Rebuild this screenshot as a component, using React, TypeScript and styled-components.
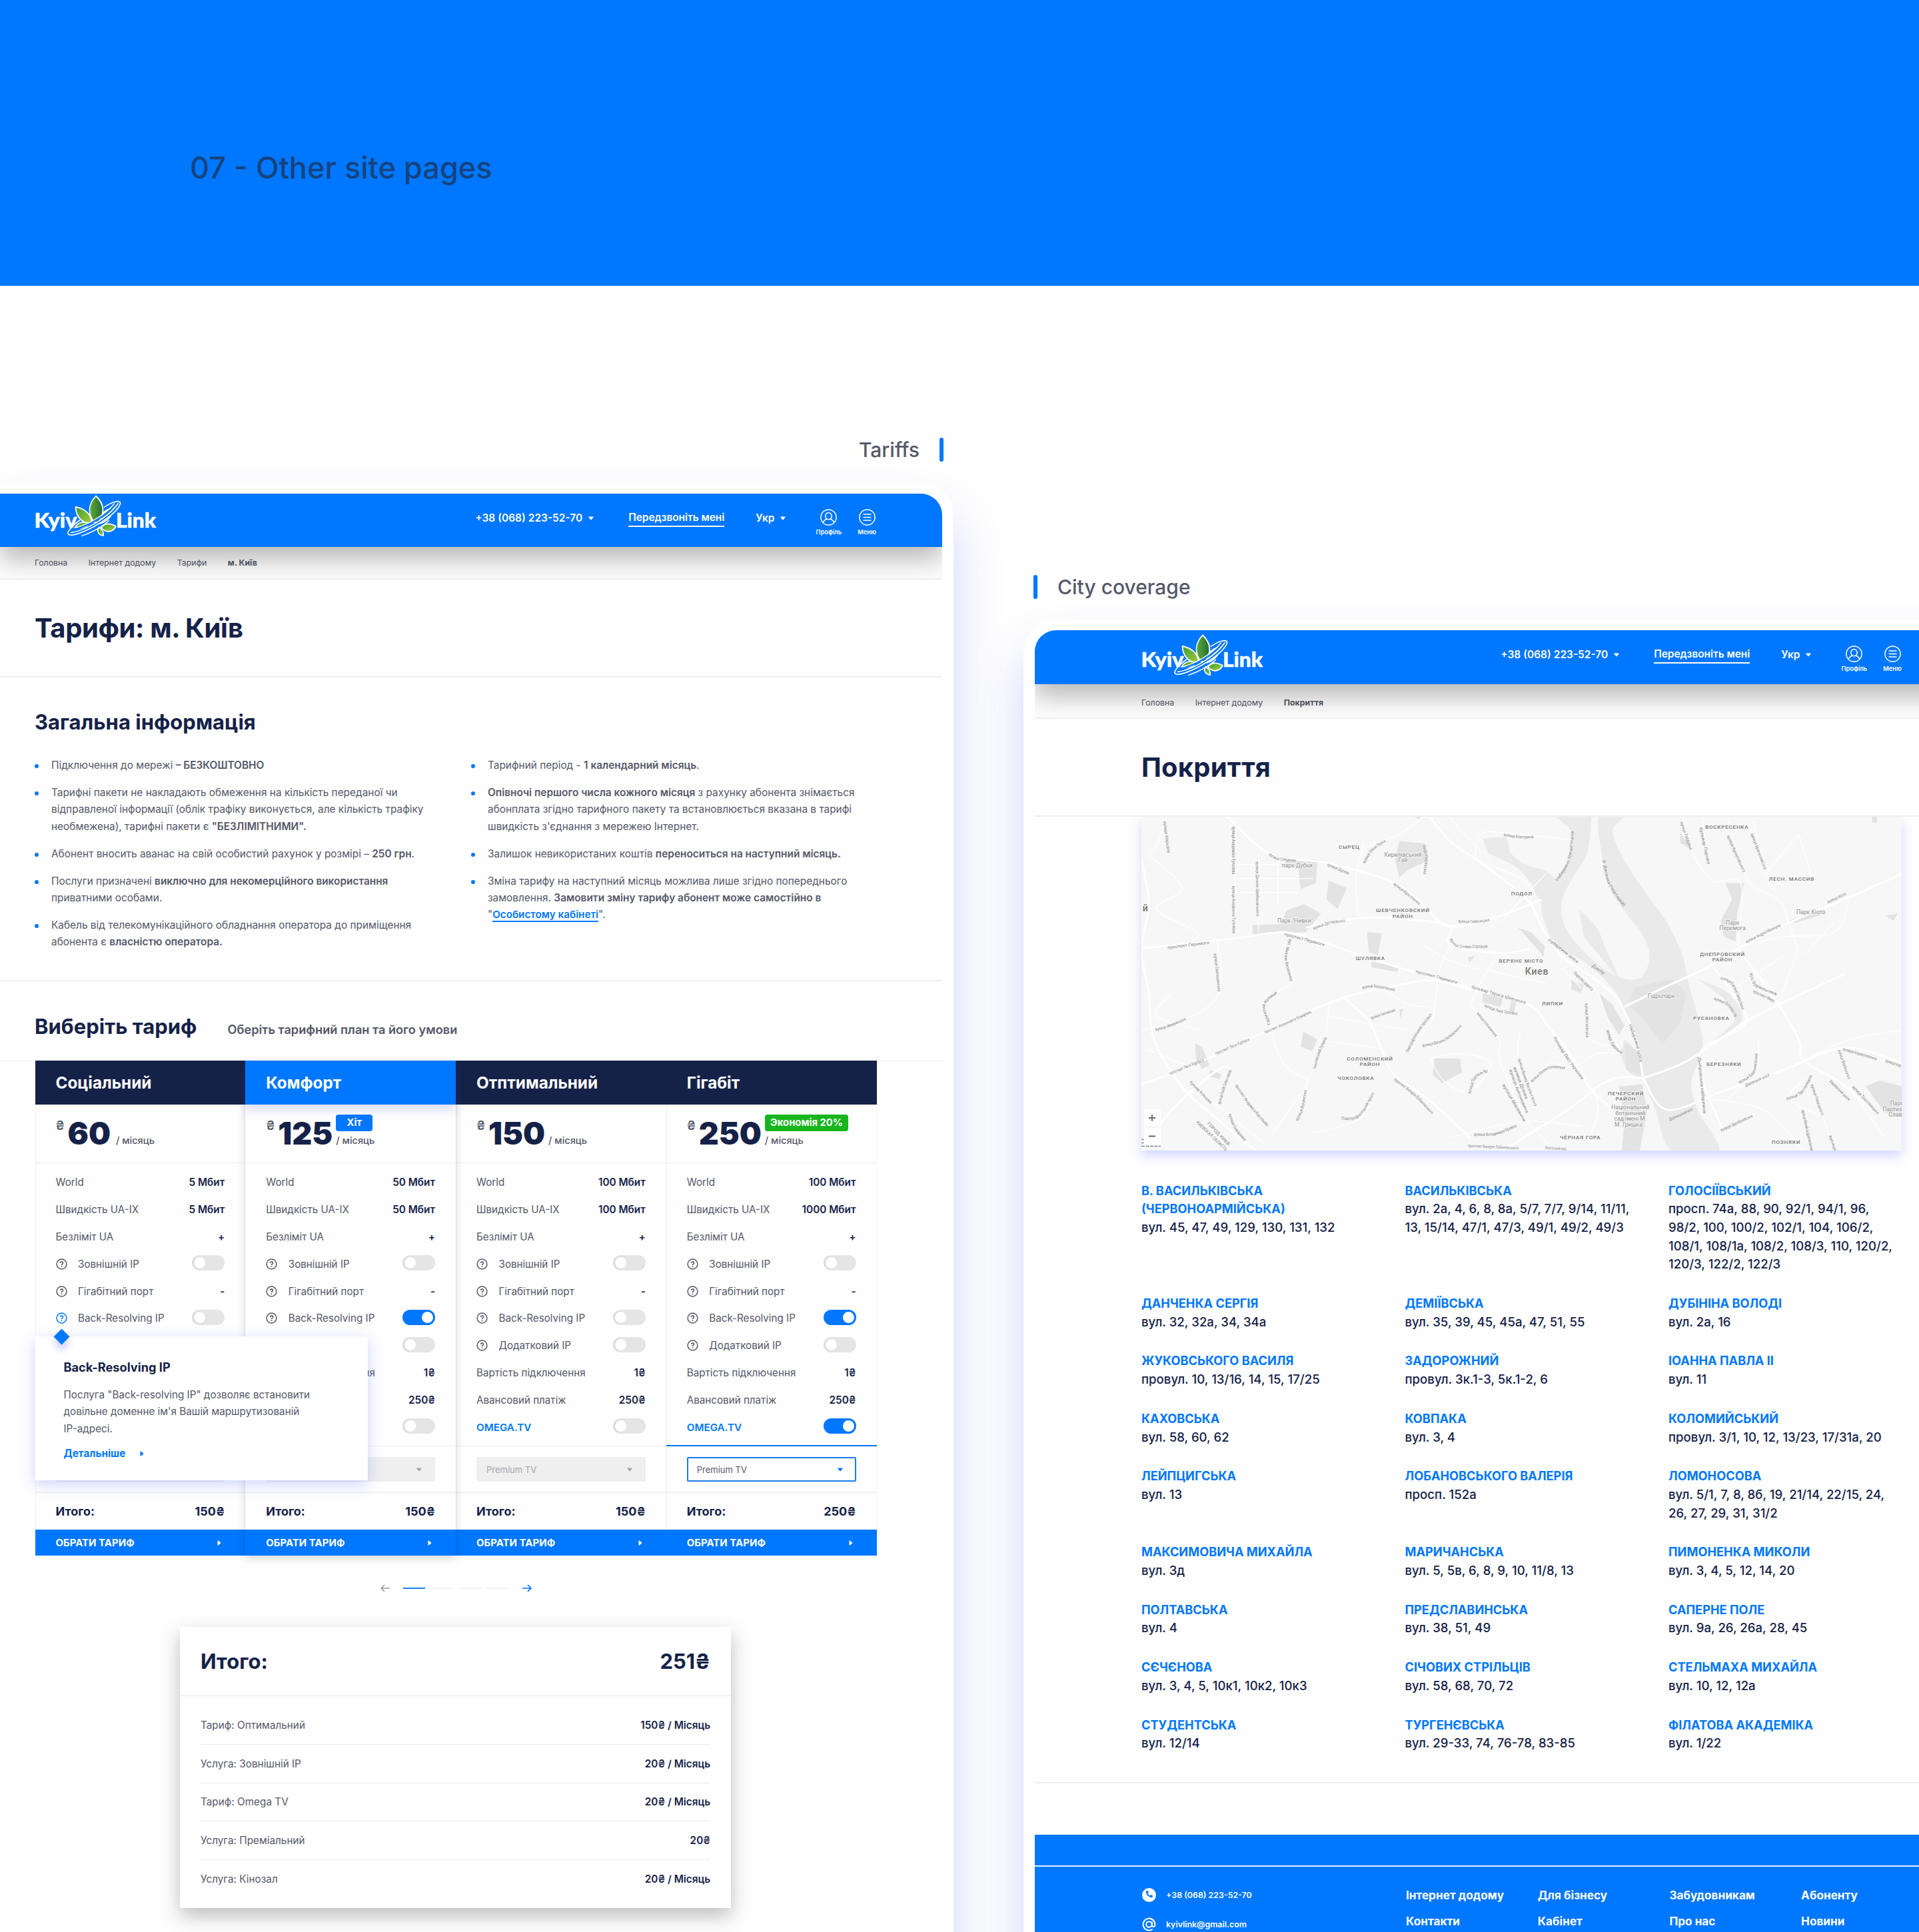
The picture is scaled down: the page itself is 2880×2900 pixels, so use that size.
import React, { Fragment, useId } from "react";
import styled, { createGlobalStyle, css } from "styled-components";

const c = {
  blue: "#0077ff",
  navy: "#152248",
  text: "#555869",
  line: "#f0f0f1",
  white: "#ffffff",
  green: "#17b51d",
};

const Global = createGlobalStyle`
  * { box-sizing: border-box; margin: 0; padding: 0; }
  html, body { width: 2880px; height: 2900px; overflow: hidden; background: #fff; }
  body { font-family: Inter, "Liberation Sans", sans-serif; color: ${c.text}; }
  ul { list-style: none; }
  svg { display: block; flex: none; }
`;

/* ---------- page frame ---------- */

const Page = styled.div`
  width: 2880px;
  height: 2900px;
  overflow: hidden;
  display: flex;
  flex-direction: column;
  background: #fefefe;
`;

const Banner = styled.header`
  flex: none;
  height: 429px;
  padding: 0 285px;
  display: flex;
  align-items: center;
  background: ${c.blue};
`;

const BannerTitle = styled.p`
  margin-top: 75px;
  font-size: 45.1px;
  line-height: 56px;
  font-weight: 500;
  color: #15437f;
`;

const Showcase = styled.main`
  flex: 1;
  min-height: 0;
  display: grid;
  grid-template-columns: 1431px 1400px;
  column-gap: 105px;
  align-items: start;
`;

const Sample = styled.section<{ $top: number }>`
  padding-top: ${(p) => p.$top}px;
`;

const SampleLabel = styled.div<{ $end?: boolean }>`
  height: 36px;
  display: flex;
  flex-direction: ${(p) => (p.$end ? "row-reverse" : "row")};
  align-items: center;
  gap: 30px;
  padding: 0 15px;
  font-size: 30px;
  font-weight: 500;
  color: ${c.text};

  &::before {
    content: "";
    width: 6px;
    height: 36px;
    border-radius: 3px;
    background: ${c.blue};
  }
`;

const Frame = styled.div<{ $side: "left" | "right" }>`
  background: #fefefe;
  box-shadow: 0 50px 70px rgba(70, 90, 255, 0.25);
  ${(p) =>
    p.$side === "left"
      ? css`
          margin-top: 32px;
          padding: 16px 17px 0 0;
          border-top-right-radius: 48px;
        `
      : css`
          margin-top: 31px;
          padding: 16px 0 0 17px;
          border-top-left-radius: 48px;
        `}
`;

const Site = styled.div<{ $side: "left" | "right" }>`
  overflow: hidden;
  background: #fefefe;
  ${(p) =>
    p.$side === "left"
      ? css`
          height: 2300px;
          border-top-right-radius: 32px;
        `
      : css`
          height: 2100px;
          border-top-left-radius: 32px;
        `}
`;

/* ---------- site header ---------- */

const TopBar = styled.div<{ $side: "left" | "right" }>`
  position: relative;
  height: ${(p) => (p.$side === "left" ? 80 : 81)}px;
  width: ${(p) => (p.$side === "left" ? "auto" : "1400px")};
  padding: ${(p) => (p.$side === "left" ? "0 99px 0 52px" : "0 99px 0 160px")};
  display: flex;
  justify-content: space-between;
  background: ${c.blue};
  color: #fff;
  box-shadow: 0 20px 36px rgba(0, 0, 0, 0.26);
`;

const LogoBox = styled.div<{ $drop: number }>`
  padding-top: ${(p) => p.$drop}px;
`;

const TopNav = styled.nav`
  display: flex;
  padding-top: 22px;
  font-size: 15.5px;
  line-height: 28px;
  font-weight: 600;
`;

const NavItem = styled.div<{ $gap?: number }>`
  display: flex;
  gap: 9px;
  height: 28px;
  padding-top: 2px;
  align-items: center;
  margin-right: ${(p) => p.$gap ?? 0}px;
  white-space: nowrap;
`;

const NavLink = styled(NavItem)`
  border-bottom: 2px solid #fff;
  line-height: 26px;
  letter-spacing: -0.08px;
`;

const NavIcon = styled.div<{ $gap?: number }>`
  display: flex;
  flex-direction: column;
  align-items: center;
  gap: 4px;
  padding-top: 1px;
  margin-right: ${(p) => p.$gap ?? 0}px;
  font-size: 9.3px;
  line-height: 12px;
`;

const Crumbs = styled.div<{ $side: "left" | "right" }>`
  height: ${(p) => (p.$side === "left" ? 49 : 52)}px;
  padding: ${(p) => (p.$side === "left" ? "0 52px" : "4px 160px 0")};
  display: flex;
  align-items: center;
  gap: 31.5px;
  font-size: 12.35px;
  border-bottom: 2px solid ${c.line};
  background: #fdfdfd;

  b {
    font-weight: 700;
  }
`;

const TitleBlock = styled.div<{ $side: "left" | "right" }>`
  position: relative;
  height: 147px;
  padding: 0 ${(p) => (p.$side === "left" ? 52 : 160)}px;
  display: flex;
  align-items: center;
  background: #fefefe;
  border-bottom: 2px solid ${c.line};
`;

const H1 = styled.h1<{ $tight?: boolean }>`
  font-size: 40px;
  line-height: 48px;
  font-weight: 700;
  letter-spacing: ${(p) => (p.$tight ? "-0.4px" : "0.2px")};
  color: ${c.navy};
`;

const H2 = styled.h2`
  font-size: 31px;
  line-height: 36px;
  font-weight: 700;
  color: ${c.navy};
`;

/* ---------- general information ---------- */

const Info = styled.section`
  height: 456px;
  padding: 49px 52px 0;
  border-bottom: 2px solid ${c.line};
`;

const InfoColumns = styled.div`
  margin-top: 34px;
  display: grid;
  grid-template-columns: 655px 1fr;
`;

const InfoList = styled.ul`
  display: flex;
  flex-direction: column;
  gap: 15.5px;
`;

const InfoItem = styled.li`
  display: flex;
  gap: 19px;
  font-size: 15.4px;
  line-height: 25.4px;
  white-space: nowrap;

  &::before {
    content: "";
    flex: none;
    width: 6px;
    height: 6px;
    margin-top: 11px;
    border-radius: 50%;
    background: ${c.blue};
  }

  b {
    font-weight: 600;
  }
`;

const CabinetLink = styled.a`
  color: ${c.blue};
  font-weight: 600;
  font-size: 15.2px;
  border-bottom: 2px solid ${c.blue};
`;

/* ---------- tariff table ---------- */

const PickBar = styled.div`
  height: 120px;
  padding: 50px 52px 0;
  display: flex;
  align-items: baseline;
  gap: 46px;
  border-bottom: 1px solid ${c.line};
`;

const PickHint = styled.p`
  font-size: 18.2px;
  font-weight: 600;
`;

const Table = styled.div`
  position: relative;
  width: 1263px;
  margin: -1px 0 0 52.5px;
  display: grid;
  grid-template-columns: repeat(4, 1fr);
`;

const Column = styled.article<{ $hit?: boolean }>`
  position: relative;
  z-index: ${(p) => (p.$hit ? 1 : 0)};
  box-shadow: ${(p) =>
    p.$hit ? "0 4px 12px rgba(0, 0, 0, 0.16)" : `inset 1px 0 ${c.line}, inset -1px 0 #f6f6f6`};
`;

const ColumnHead = styled.h3<{ $hit?: boolean }>`
  height: 66px;
  padding: 0 31px;
  display: flex;
  align-items: center;
  font-size: 24.3px;
  font-weight: 700;
  color: #fff;
  background: ${(p) => (p.$hit ? c.blue : c.navy)};
  box-shadow: ${(p) => (p.$hit ? "0 8px 14px rgba(70, 90, 255, 0.2)" : "none")};
`;

const Price = styled.div`
  height: 88px;
  padding: 15px 31px 0;
  display: flex;
  border-bottom: 1px solid #ececee;
  color: ${c.text};
`;

const Currency = styled.span`
  margin-top: 7px;
  width: 18px;
  font-size: 19px;
  line-height: 20px;
  font-weight: 600;
`;

const Amount = styled.span`
  margin-top: 5px;
  font-size: 46.5px;
  line-height: 46px;
  font-weight: 900;
  color: ${c.navy};
`;

const PriceSide = styled.div<{ $gap: number }>`
  margin-left: ${(p) => p.$gap}px;
  display: flex;
  flex-direction: column;
  align-items: flex-start;
  font-size: 14.5px;
  line-height: 20px;
  font-weight: 500;
  gap: 4px;
`;

const BadgeSlot = styled.div`
  height: 25px;
`;

const Badge = styled.span<{ $wide?: boolean }>`
  display: block;
  width: ${(p) => (p.$wide ? 125 : 55)}px;
  height: 25px;
  border-radius: 4px;
  text-align: center;
  line-height: 25px;
  font-size: 14.8px;
  font-weight: 700;
  color: #fff;
  background: ${(p) => (p.$wide ? c.green : c.blue)};
`;

const Features = styled.div<{ $active?: boolean }>`
  height: 425px;
  padding: 8.3px 31px 0;
  border-bottom: ${(p) => (p.$active ? `2px solid ${c.blue}` : "1px solid #ececee")};
`;

const Feature = styled.div`
  height: 40.85px;
  display: flex;
  align-items: center;
  font-size: 15.2px;
`;

const FeatureName = styled.span<{ $brand?: boolean }>`
  flex: 1;
  white-space: nowrap;
  font-weight: ${(p) => (p.$brand ? 600 : 400)};
  color: ${(p) => (p.$brand ? c.blue : c.text)};
`;

const FeatureHelp = styled.span`
  width: 33.5px;
`;

const FeatureValue = styled.b`
  font-size: 15.3px;
  font-weight: 600;
  color: ${c.navy};
  white-space: nowrap;
`;

const Toggle = styled.span<{ $on?: boolean }>`
  flex: none;
  width: 49px;
  height: 23px;
  margin-top: -3px;
  padding: 3px;
  display: flex;
  justify-content: ${(p) => (p.$on ? "flex-end" : "flex-start")};
  border-radius: 12px;
  background: ${(p) => (p.$on ? c.blue : "#e5e5e5")};

  &::before {
    content: "";
    width: 17px;
    height: 17px;
    border-radius: 50%;
    background: #fff;
    box-shadow: ${(p) => (p.$on ? "none" : "-2px 0 3px rgba(0, 0, 0, 0.08)")};
  }
`;

const SelectArea = styled.div`
  height: 70px;
  padding: 16px 31px;
  border-bottom: 2px solid ${c.line};
`;

const Select = styled.div<{ $active?: boolean }>`
  height: 37px;
  padding: 0 20px 0 15px;
  display: flex;
  align-items: center;
  justify-content: space-between;
  border-radius: 2px;
  font-size: 13px;
  ${(p) =>
    p.$active
      ? css`
          border: 2px solid #1b7df0;
          padding: 0 18px 0 13px;
          color: ${c.text};
        `
      : css`
          background: #efefef;
          color: #a2a3ab;
        `}
`;

const Total = styled.div`
  height: 55px;
  padding: 0 31px;
  display: flex;
  align-items: center;
  justify-content: space-between;
  font-size: 18px;
  font-weight: 700;
  color: ${c.navy};
`;

const Choose = styled.button`
  width: 100%;
  height: 39px;
  padding: 0 36px 0 31px;
  border: 0;
  display: flex;
  align-items: center;
  justify-content: space-between;
  background: ${c.blue};
  color: #fff;
  font: 700 15px Inter, sans-serif;
`;

const Popup = styled.aside`
  position: absolute;
  z-index: 2;
  left: 0;
  top: 414px;
  width: 499px;
  height: 216px;
  padding: 34px 43px 0;
  background: #fff;
  box-shadow: 0 6px 20px rgba(70, 90, 255, 0.26);
  font-size: 15.25px;
  line-height: 25.4px;

  &::before {
    content: "";
    position: absolute;
    left: 31.5px;
    top: -8.5px;
    width: 17px;
    height: 17px;
    transform: rotate(45deg);
    background: ${c.blue};
    box-shadow: 6px 6px 12px rgba(70, 90, 255, 0.3);
  }
`;

const PopupTitle = styled.h4`
  font-size: 18.2px;
  line-height: 24px;
  font-weight: 700;
  color: ${c.navy};
  margin-bottom: 17px;
`;

const PopupMore = styled.a`
  margin-top: 12px;
  display: flex;
  align-items: center;
  gap: 22px;
  font-weight: 700;
  color: ${c.blue};
`;

const Pager = styled.div`
  width: 1263px;
  height: 20px;
  margin: 39px 0 0 53px;
  display: flex;
  justify-content: center;
  align-items: center;
  gap: 20px;
`;

const PagerBars = styled.div`
  display: flex;
  gap: 9px;
`;

const PagerBar = styled.span<{ $on?: boolean }>`
  width: 33px;
  height: 2px;
  background: ${(p) => (p.$on ? "#1b7df0" : "#f0f0f1")};
`;

const Summary = styled.section`
  width: 827px;
  margin: 48px 0 0 270px;
  padding-bottom: 16px;
  background: #fff;
  box-shadow: 0 12px 28px rgba(0, 0, 0, 0.26);
`;

const SummaryHead = styled.div`
  height: 104px;
  padding: 0 31px;
  margin-bottom: 14.5px;
  display: flex;
  align-items: center;
  justify-content: space-between;
  border-bottom: 1px solid #e9e9eb;
  font-size: 31px;
  font-weight: 700;
  color: ${c.navy};
`;

const SummaryRow = styled.div`
  height: 57.6px;
  margin: 0 31px;
  display: flex;
  align-items: center;
  justify-content: space-between;
  font-size: 15.3px;

  & + & {
    border-top: 1px solid #e9e9eb;
  }
`;

/* ---------- coverage page ---------- */

const MapCard = styled.div`
  width: 1141px;
  height: 501px;
  margin-left: 160px;
  background: #f7f7f7;
  box-shadow: 0 8px 16px rgba(70, 90, 255, 0.24);
`;

const Districts = styled.section`
  height: 950px;
  padding: 46.5px 0 0 160px;
  display: grid;
  grid-template-columns: repeat(3, 395.5px);
  align-content: start;
  row-gap: 31px;
  border-bottom: 2px solid ${c.line};
`;

const District = styled.div`
  font-size: 18.6px;
  line-height: 27.7px;
  font-weight: 500;
  color: ${c.navy};
  white-space: pre-line;
`;

const DistrictName = styled.h3`
  font-size: 18.2px;
  font-weight: 700;
  color: ${c.blue};
`;

const Footer = styled.footer`
  width: 1400px;
  height: 300px;
  margin-top: 77px;
  padding-top: 46px;
  background: ${c.blue};
  color: #fff;
`;

const FooterBody = styled.div`
  border-top: 2px solid #e6f2ff;
  padding: 29.5px 0 0 161px;
  display: flex;
`;

const Contacts = styled.ul`
  width: 396px;
`;

const Contact = styled.li`
  height: 43.5px;
  padding-bottom: 17px;
  display: flex;
  align-items: center;
  gap: 15px;
  font-size: 12.4px;
  font-weight: 600;
`;

const FooterLinks = styled.div`
  display: grid;
  grid-template-columns: repeat(4, 197.7px);
  grid-auto-rows: 39.7px;
  font-size: 17.2px;
  line-height: 26px;
  font-weight: 700;
`;

/* ---------- icons ---------- */

const CaretDown = ({ color = "#fff" }: { color?: string }) => (
  <svg width="8" height="6" viewBox="0 0 8 6">
    <path d="M1 .5h6q1 0 .4 1L4.8 4.9q-.8.9-1.6 0L.6 1.5Q0 .5 1 .5Z" fill={color} />
  </svg>
);

const CaretRight = ({ color = "#fff" }: { color?: string }) => (
  <svg width="6" height="8" viewBox="0 0 6 8">
    <path d="M.5 1q0-1 1-.4L4.9 3.2q.9.8 0 1.6L1.5 7.4Q.5 8 .5 7Z" fill={color} />
  </svg>
);

const ProfileIcon = () => (
  <svg width="25" height="25" viewBox="0 0 25 25" fill="none" stroke="#fff" strokeWidth="1.5">
    <circle cx="12.5" cy="12.5" r="11.6" />
    <ellipse cx="12.5" cy="10.6" rx="4.7" ry="5.2" />
    <path d="M4.200 20.400c1-3 3-4.300 5.800-5.400M20.800 20.400c-1-3-3-4.300-5.800-5.400" />
  </svg>
);

const MenuIcon = () => (
  <svg width="25" height="25" viewBox="0 0 25 25" fill="none" stroke="#fff" strokeWidth="1.5">
    <circle cx="12.5" cy="12.5" r="11.6" />
    <path d="M6.500 8h12M6.500 12.500h12M6.500 17h12" />
  </svg>
);

const HelpIcon = ({ color = c.text }: { color?: string }) => (
  <svg width="17" height="17" viewBox="0 0 17 17" fill="none" stroke={color} strokeWidth="1.5">
    <circle cx="8.500" cy="8.500" r="7.400" />
    <path d="M6.500 6.900a2 2 0 1 1 2.700 1.900q-.7.300-.7 1.200" strokeWidth="1.600" />
    <circle cx="8.500" cy="12.200" r=".9" fill={color} stroke="none" />
  </svg>
);

const ArrowIcon = ({ color, flip }: { color: string; flip?: boolean }) => (
  <svg width="14" height="12" viewBox="0 0 14 12" fill="none" stroke={color} strokeWidth="1.700">
    <path d={flip ? "M14 6H1.500M6 1 1.200 6 6 11" : "M0 6h12.500M8 1l4.800 5L8 11"} />
  </svg>
);

const PhoneIcon = () => (
  <svg width="21" height="21" viewBox="0 0 21 21">
    <circle cx="10.500" cy="10.500" r="10.500" fill="#fff" />
    <path
      d="M6.300 4.600 8.200 4q.5-.1.700.4l.9 2.100q.2.500-.2.800l-1.100.9a7 7 0 0 0 3.400 3.400l.9-1.100q.3-.4.800-.2l2.100.9q.5.200.4.700l-.6 1.900q-.1.500-.7.500A9.300 9.300 0 0 1 5.700 5.300q0-.5.600-.7Z"
      fill={c.blue}
    />
  </svg>
);

const AtIcon = () => (
  <svg width="21" height="21" viewBox="0 0 21 21" fill="none" stroke="#fff" strokeWidth="2">
    <circle cx="10.500" cy="10.500" r="4.300" />
    <path d="M14.800 6.200v5.300q0 2.600 2.300 2.600t2.300-3.600a8.900 8.900 0 1 0-3.600 7.200" />
  </svg>
);

const Logo = () => {
  const id = useId().replace(/:/g, "");
  return (
    <svg width="184" height="64" viewBox="0 0 184 64">
      <defs>
        <linearGradient id={`${id}a`} x1="0" y1="0" x2="1" y2="0">
          <stop offset="0" stopColor="#63ac35" />
          <stop offset="1" stopColor="#1f6b35" />
        </linearGradient>
        <linearGradient id={`${id}b`} x1="0" y1="0" x2="1" y2="1">
          <stop offset="0" stopColor="#3c8f37" />
          <stop offset="1" stopColor="#9ccb3b" />
        </linearGradient>
        <linearGradient id={`${id}c`} x1="0" y1="0" x2="1" y2="1">
          <stop offset="0" stopColor="#3f9a35" />
          <stop offset="1" stopColor="#a5d03c" />
        </linearGradient>
      </defs>
      <g
        fontFamily="Lato, sans-serif"
        fontWeight="900"
        fontSize="29.500"
        fill="#fff"
        stroke="#fff"
        strokeWidth=".5"
      >
        <text x="-.5" y="50" textLength="64" lengthAdjust="spacingAndGlyphs">Kyiv</text>
        <text x="122" y="50" textLength="60" lengthAdjust="spacingAndGlyphs">Link</text>
      </g>
      <g stroke="#fff" strokeWidth="1.800" strokeLinejoin="round">
        <path d="M61 49C65 42 73 41 82 42 80 50 70 53 61 49Z" fill={`url(#${id}b)`} />
        <path d="M61.500 19C73 21 85 28 86 43 72 45 62 34 61.500 19Z" fill={`url(#${id}c)`} />
        <path d="M119 20C107 22 98 29 95 44 107 43 116 34 119 20Z" fill={`url(#${id}b)`} />
        <path d="M92 2.500C104 14 106 27 96 42H89C79 28 81 14 92 2.500Z" fill={`url(#${id}a)`} />
        <path d="M100 50C104 43 113 43 122 48 117 58 106 58 100 50Z" fill={`url(#${id}c)`} />
        <path d="M96 50C102 53 104 58 103 62 96 61 93 56 96 50Z" fill={`url(#${id}b)`} />
      </g>
      <g fill="none" transform="translate(90.500 37) rotate(-28)">
        <path d="M-43 3C-22 11 20 10 43-3" stroke={c.blue} strokeWidth="3.500" />
        <path d="M-36-1C-16 5 18 4 38-5" stroke={c.blue} strokeWidth="2.500" />
        <path d="M-20-9.200C-36-7-47-2.500-46 1.500-44 12 30 13 44.500-2.500 48-8 34-11 20-9" stroke="#fff" strokeWidth="1.700" />
        <path d="M-42 1C-20 9 20 7.500 42-4.500" stroke="#fff" strokeWidth="1.600" />
        <path d="M-34-3C-14 3 16 2 37-7" stroke="#fff" strokeWidth="1.400" />
        <path d="M-30 13C-12 16 6 15 18 12" stroke="#fff" strokeWidth="1.400" />
      </g>
    </svg>
  );
};

/* ---------- city map ---------- */

type Pt = [number, number];

const MX = 0.7589;
const MY = 1 / 2.851;
const toMap = ([x, y]: Pt): Pt => [(x - 30) * MX, (y - 46) * MY];

const smooth = (raw: Pt[]) => {
  const p = raw.map(toMap);
  let d = `M${p[0][0]} ${p[0][1]}`;
  for (let i = 0; i < p.length - 1; i++) {
    const a = p[i - 1] ?? p[i];
    const b = p[i];
    const e = p[i + 1];
    const f = p[i + 2] ?? e;
    d += `C${b[0] + (e[0] - a[0]) / 6} ${b[1] + (e[1] - a[1]) / 6} ${e[0] - (f[0] - b[0]) / 6} ${e[1] - (f[1] - b[1]) / 6} ${e[0]} ${e[1]}`;
  }
  return d;
};

const lengthOf = (raw: Pt[]) => {
  const p = raw.map(toMap);
  return p.slice(1).reduce((s, q, i) => s + Math.hypot(q[0] - p[i][0], q[1] - p[i][1]), 0);
};

const rivers: Pt[][] = [
  [[845, 40], [880, 110], [878, 220], [850, 320], [822, 400], [828, 500], [850, 590], [900, 660], [945, 740], [975, 820], [990, 900], [1008, 1000], [1018, 1090], [1022, 1170], [1045, 1290], [1080, 1480], [1172, 1480], [1130, 1300], [1118, 1180], [1140, 1040], [1130, 900], [1112, 760], [1100, 640], [1070, 500], [1030, 380], [990, 250], [962, 110], [985, 40], [935, 40], [940, 200], [955, 340], [985, 450], [1018, 540], [1035, 640], [1020, 730], [985, 740], [940, 690], [895, 600], [865, 500], [862, 400], [885, 300], [912, 200], [920, 40]],
  [[705, 140], [750, 138], [760, 200], [790, 250], [830, 280], [850, 330], [820, 400], [800, 330], [770, 260], [715, 200]],
  [[895, 440], [930, 520], [950, 620], [975, 740], [940, 650], [905, 560]],
  [[1130, 740], [1190, 800], [1218, 900], [1190, 980], [1140, 1040], [1185, 960], [1205, 900], [1180, 820]],
  [[985, 1000], [1012, 1060], [1020, 1160], [990, 1130], [978, 1060]],
];

const parks: Pt[][] = [
  [[318, 225], [378, 230], [375, 330], [345, 355], [340, 270], [312, 262]],
  [[400, 318], [436, 350], [418, 440], [396, 400]],
  [[540, 150], [590, 160], [592, 240], [560, 270], [540, 305], [532, 230]],
  [[318, 445], [352, 420], [385, 460], [355, 540], [250, 548], [250, 510], [305, 505]],
  [[476, 540], [505, 545], [498, 640], [480, 625]],
  [[485, 665], [540, 690], [535, 710], [485, 690]],
  [[705, 800], [745, 820], [740, 860], [705, 840]],
  [[762, 830], [772, 835], [766, 890], [757, 880]],
  [[775, 520], [800, 540], [828, 600], [825, 645], [808, 600]],
  [[1185, 330], [1222, 330], [1208, 460], [1205, 580], [1182, 560], [1176, 490], [1198, 400]],
  [[1310, 490], [1380, 440], [1382, 460], [1325, 500]],
  [[610, 1080], [660, 1080], [664, 1140], [625, 1185], [606, 1150]],
  [[350, 965], [378, 1000], [368, 1048], [345, 1030]],
  [[136, 1015], [150, 1030], [165, 1110], [150, 1125], [138, 1080]],
  [[165, 1130], [187, 1145], [185, 1170], [165, 1158]],
  [[880, 745], [905, 765], [900, 800], [880, 785]],
  [[935, 800], [962, 850], [985, 940], [975, 980], [950, 900]],
  [[985, 1010], [1015, 1060], [1020, 1155], [990, 1130]],
  [[1005, 775], [1080, 740], [1108, 800], [1095, 930], [1060, 1020], [1030, 930], [995, 850]],
  [[975, 1200], [1020, 1190], [1030, 1300], [1015, 1480], [980, 1480], [985, 1350]],
  [[1462, 1200], [1490, 1175], [1535, 1200], [1535, 1330], [1500, 1310]],
  [[1475, 46], [1485, 46], [1485, 72], [1475, 72]],
  [[1095, 110], [1118, 185], [1096, 160]],
  [[675, 650], [690, 640], [680, 668]],
  [[540, 865], [548, 870], [542, 910]],
  [[1500, 470], [1525, 460], [1518, 490]],
  [[568, 40], [585, 40], [578, 56]],
];

const mainRoads: Pt[][] = [
  [[30, 608], [120, 590], [220, 565], [315, 540], [400, 590], [500, 665], [600, 730], [700, 790], [800, 855], [830, 930], [870, 1040], [905, 1170], [940, 1260], [1010, 1340]],
  [[30, 1190], [120, 1120], [230, 1010], [330, 910], [430, 820], [530, 770], [600, 745], [650, 765], [680, 790]],
  [[600, 46], [640, 150], [700, 240], [760, 340], [800, 420], [825, 530], [860, 640], [920, 730], [965, 810], [990, 900], [1010, 1010], [1022, 1165]],
  [[985, 860], [1060, 780], [1150, 690], [1210, 610], [1310, 500], [1430, 390], [1535, 290]],
  [[1022, 1165], [1110, 1090], [1220, 930], [1290, 850], [1420, 720]],
  [[1022, 1165], [980, 1160], [940, 1190], [880, 1290], [800, 1400], [740, 1480]],
  [[30, 230], [45, 420], [30, 610], [45, 800], [55, 1000], [110, 1200], [180, 1340], [260, 1480]],
  [[200, 46], [285, 205], [400, 245], [530, 330], [590, 430], [640, 515], [740, 470], [820, 400]],
  [[355, 520], [460, 480], [560, 485], [640, 515], [640, 590], [740, 630], [800, 610]],
  [[1022, 1165], [1070, 1300], [1180, 1220], [1300, 1130], [1420, 1035], [1535, 1100]],
  [[1210, 610], [1290, 850], [1330, 1000], [1340, 1090], [1410, 1180], [1480, 1310]],
  [[430, 820], [480, 920], [505, 1040], [530, 1150], [600, 1260], [680, 1420]],
  [[1165, 700], [1195, 790], [1225, 930], [1140, 1040], [1140, 1170], [1180, 1390]],
  [[30, 1480], [90, 1300], [180, 1130], [205, 1120]],
];

const minorRoads: Pt[][] = [
  [[215, 60], [215, 540]], [[262, 200], [262, 540]], [[180, 575], [185, 790], [130, 900], [30, 960]],
  [[325, 560], [318, 650], [330, 750], [275, 830], [283, 930], [310, 1100], [360, 1170]],
  [[470, 160], [455, 300], [458, 470]], [[590, 46], [540, 120], [475, 180], [465, 260]],
  [[640, 46], [660, 100], [720, 230]], [[690, 230], [700, 120], [760, 118], [880, 145]],
  [[505, 780], [560, 850], [610, 880], [560, 1050]], [[680, 850], [735, 980], [740, 1100], [790, 1340]],
  [[490, 910], [550, 860]], [[400, 850], [395, 960], [370, 1120], [350, 1230], [340, 1340]],
  [[640, 600], [620, 700], [610, 880]], [[740, 630], [710, 720], [680, 850]],
  [[830, 290], [760, 450], [740, 500]], [[1100, 46], [1120, 200], [1160, 320], [1215, 330], [1210, 600]],
  [[1140, 46], [1150, 250]], [[1190, 60], [1230, 320], [1290, 400], [1310, 500], [1330, 620]],
  [[1240, 60], [1265, 280], [1285, 370]], [[1330, 120], [1260, 300]], [[1330, 120], [1360, 330]],
  [[1300, 640], [1210, 770]], [[1330, 600], [1290, 850]], [[1240, 700], [1290, 810]],
  [[1250, 1000], [1245, 1130], [1190, 1250]], [[1410, 1040], [1430, 1170]], [[1355, 1150], [1310, 1250], [1380, 1330]],
  [[1340, 1090], [1430, 1000], [1535, 960]], [[1140, 1250], [1260, 1300], [1340, 1480]],
  [[780, 960], [775, 1090], [810, 1280]], [[740, 1180], [790, 1340], [850, 1480]],
  [[800, 1180], [840, 1100], [880, 1120], [930, 1060], [980, 1060]], [[860, 1000], [930, 1250], [920, 1400]],
  [[910, 840], [915, 990], [960, 1030]], [[600, 1080], [660, 1060], [720, 1100], [680, 1220], [630, 1180], [600, 1080]],
  [[130, 1180], [190, 1300], [270, 1440]], [[215, 1190], [280, 1370]], [[490, 1220], [460, 1340], [370, 1400]],
  [[345, 1230], [290, 1400]], [[80, 46], [60, 170], [45, 200]], [[45, 210], [110, 350], [60, 440], [140, 540], [130, 580]],
  [[640, 1420], [780, 1350], [900, 1370]], [[680, 1450], [820, 1470]], [[1400, 500], [1340, 640]],
  [[890, 700], [930, 790], [950, 900], [975, 1050]], [[1430, 1200], [1500, 1420]], [[1360, 1200], [1400, 1480]],
  [[210, 310], [370, 310]], [[210, 370], [340, 370]], [[210, 250], [300, 250]], [[300, 250], [300, 420]],
  [[400, 900], [560, 960]], [[380, 1000], [510, 1040]], [[710, 700], [830, 760]], [[740, 620], [800, 720]],
  [[590, 600], [640, 660], [700, 700]], [[860, 690], [900, 780]], [[700, 240], [790, 320], [800, 420]],
  [[90, 800], [60, 900], [150, 960]], [[40, 1040], [130, 1120]], [[1220, 600], [1300, 560], [1400, 540], [1430, 400]],
];

const places: { at: Pt; text: string[]; kind?: "park" | "city" }[] = [
  { at: [441, 173], text: ["СЫРЕЦ"] },
  { at: [547, 458], text: ["ШЕВЧЕНКОВСКИЙ", "РАЙОН"] },
  { at: [782, 375], text: ["ПОДОЛ"] },
  { at: [1188, 90], text: ["ВОСКРЕСЕНКА"] },
  { at: [1316, 311], text: ["ЛЕСН. МАССИВ"] },
  { at: [483, 649], text: ["ШУЛЯВКА"] },
  { at: [781, 662], text: ["ВЕРХНЄ МІСТО"] },
  { at: [1179, 645], text: ["ДНЕПРОВСКИЙ", "РАЙОН"] },
  { at: [843, 845], text: ["ЛИПКИ"] },
  { at: [1157, 907], text: ["РУСАНОВКА"] },
  { at: [482, 1092], text: ["СОЛОМЕНСКИЙ", "РАЙОН"] },
  { at: [454, 1164], text: ["ЧОКОЛОВКА"] },
  { at: [1182, 1104], text: ["БЕРЕЗНЯКИ"] },
  { at: [988, 1240], text: ["ПЕЧЕРСКИЙ", "РАЙОН"] },
  { at: [898, 1417], text: ["ЧЁРНАЯ ГОРА"] },
  { at: [1305, 1437], text: ["ПОЗНЯКИ"] },
  { at: [812, 707], text: ["Киев"], kind: "city" },
  { at: [38, 437], text: ["й"], kind: "city" },
  { at: [547, 220], text: ["Кирилівський", "Гай"], kind: "park" },
  { at: [338, 253], text: ["парк Дубки"], kind: "park" },
  { at: [334, 491], text: ['Парк "Нивки"'], kind: "park" },
  { at: [1199, 511], text: ["Парк", "Перемога"], kind: "park" },
  { at: [1354, 455], text: ["Парк Кіото"], kind: "park" },
  { at: [1058, 814], text: ["Гідропарк"], kind: "park" },
  { at: [997, 1326], text: ["Національний", "ботанічний", "сад імені М.", "М. Гришка…"], kind: "park" },
  { at: [1524, 1297], text: ["Парк", "Партизанс", "Слави"], kind: "park" },
];

const streets: { path: Pt[]; name: string }[] = [
  { path: [[76, 66], [84, 200]], name: "вулиця Маршала" },
  { path: [[212, 88], [212, 292]], name: "вулиця Академіка Туполєва" },
  { path: [[212, 342], [213, 545]], name: "вулиця Академіка Туполєва" },
  { path: [[259, 238], [260, 472]], name: "вулиця Данила Щербаківського" },
  { path: [[283, 205], [300, 225], [335, 232]], name: "вулиця Стеценка" },
  { path: [[398, 250], [440, 288]], name: "вулиця Щусєва" },
  { path: [[470, 243], [485, 190], [512, 148]], name: "вулиця Олени Теліги" },
  { path: [[588, 168], [594, 215], [590, 292]], name: "Петропавлівська" },
  { path: [[747, 122], [775, 132], [805, 132]], name: "вулиця Електриків" },
  { path: [[851, 318], [875, 230], [882, 108]], name: "Набережно-Хрещатицька" },
  { path: [[530, 332], [555, 375], [580, 418]], name: "вулиця Юрія Іллєнка" },
  { path: [[945, 232], [955, 330], [985, 428]], name: "р. Десенка (Чорторий)" },
  { path: [[657, 493], [690, 495], [718, 486]], name: "вулиця Глибочицька" },
  { path: [[642, 568], [658, 600], [715, 600]], name: "вулиця Січових Стрільців" },
  { path: [[370, 524], [400, 500], [432, 490]], name: "вулиця Дегтярівська" },
  { path: [[82, 606], [164, 584]], name: "проспект Перемоги" },
  { path: [[313, 548], [392, 594]], name: "проспект Перемоги" },
  { path: [[573, 708], [654, 755]], name: "проспект Перемоги" },
  { path: [[683, 774], [790, 842]], name: "бульвар Тараса Шевченка" },
  { path: [[835, 572], [865, 620], [893, 668]], name: "Набережне шосе" },
  { path: [[922, 682], [945, 716]], name: "Днепр" },
  { path: [[886, 712], [922, 787]], name: "Паркова дорога" },
  { path: [[176, 632], [184, 793]], name: "вулиця Святошинська" },
  { path: [[325, 570], [316, 650], [327, 748]], name: "вул. Миколи Василенка" },
  { path: [[283, 936], [272, 850], [298, 795]], name: "Гарматна вулиця" },
  { path: [[467, 778], [490, 770], [531, 786]], name: "вулиця Борщагівська" },
  { path: [[484, 908], [532, 872]], name: "вулиця Смілянська" },
  { path: [[58, 958], [85, 940], [117, 910]], name: "вулиця Жмеринська" },
  { path: [[273, 968], [310, 935], [365, 880]], name: "проспект Космонавта Комарова" },
  { path: [[177, 1060], [243, 998]], name: "проспект Леся Курбаса" },
  { path: [[86, 1145], [153, 1087]], name: "проспект Леся Курбаса" },
  { path: [[555, 1055], [575, 970], [603, 890]], name: "Повітрофлотський проспект" },
  { path: [[586, 1026], [630, 1000], [662, 940]], name: "вулиця Василя Липківського" },
  { path: [[695, 885], [732, 985]], name: "вулиця Солом'янська" },
  { path: [[709, 853], [735, 875], [774, 890]], name: "вулиця Льва Толстого" },
  { path: [[910, 845], [912, 990]], name: "вулиця Московська" },
  { path: [[847, 990], [870, 1070], [903, 1168]], name: "бульвар Лесі Українки" },
  { path: [[996, 935], [1010, 1020], [1018, 1095]], name: "Набережне шосе" },
  { path: [[952, 960], [962, 1020], [980, 1057]], name: "вулиця Лаврська" },
  { path: [[1176, 735], [1200, 765], [1220, 872]], name: "вулиця Євгена Сверстюка" },
  { path: [[1163, 823], [1190, 850], [1206, 902]], name: "вулиця Ентузіастів" },
  { path: [[1236, 716], [1245, 765], [1287, 806]], name: "вул. Будівельників" },
  { path: [[1240, 792], [1282, 835]], name: "проспект Миру" },
  { path: [[1226, 582], [1293, 510]], name: "вулиця Андрія Малишка" },
  { path: [[1387, 412], [1423, 375]], name: "вулиця Кіото" },
  { path: [[1098, 68], [1117, 186]], name: "вулиця Райдужна" },
  { path: [[1136, 92], [1152, 248]], name: "бульвар Перова" },
  { path: [[1190, 127], [1222, 282]], name: "вулиця Курнатовського" },
  { path: [[1237, 118], [1264, 270]], name: "вулиця Братиславська" },
  { path: [[1133, 1075], [1144, 1315]], name: "Дніпровська набережна" },
  { path: [[1212, 1183], [1240, 1140], [1246, 1058]], name: "вулиця Березняківська" },
  { path: [[1224, 1196], [1271, 1150]], name: "Дарницьке шосе" },
  { path: [[1074, 1342], [1121, 1296]], name: "Дарницький міст" },
  { path: [[1306, 1253], [1335, 1225], [1354, 1152]], name: "вулиця Тростянецька" },
  { path: [[1356, 1192], [1377, 1322]], name: "вулиця Ревуцького" },
  { path: [[1392, 1175], [1430, 1258]], name: "Харківське шосе" },
  { path: [[1410, 1045], [1430, 1168]], name: "вулиця Вербицького" },
  { path: [[1437, 1200], [1487, 1315]], name: "вулиця Тростянецька" },
  { path: [[1418, 1040], [1484, 1082]], name: "вулиця Бориспільська" },
  { path: [[1502, 1090], [1532, 1112]], name: "вулиця Бор" },
  { path: [[1176, 1388], [1238, 1325]], name: "вулиця Здолбунівська" },
  { path: [[1338, 1302], [1356, 1474]], name: "вулиця Михайла Драгоманова" },
  { path: [[1392, 1410], [1402, 1474]], name: "вулиця" },
  { path: [[801, 1178], [835, 1120], [868, 1120]], name: "вулиця Євгена Коновальця" },
  { path: [[777, 1082], [790, 1170], [810, 1283]], name: "вулиця Велика Васильківська" },
  { path: [[768, 1118], [792, 1252]], name: "вулиця Ділова" },
  { path: [[760, 1128], [775, 1220], [793, 1312]], name: "вулиця Антоновича" },
  { path: [[746, 1192], [788, 1348]], name: "вулиця Малевича" },
  { path: [[678, 1230], [690, 1160], [714, 1132]], name: "вулиця Протасів Яр" },
  { path: [[688, 1406], [730, 1402], [771, 1368]], name: "вулиця Володимира Брожка" },
  { path: [[676, 1454], [776, 1464]], name: "проспект Валерія Лобановського" },
  { path: [[828, 1462], [870, 1468]], name: "Лисогірський узвіз" },
  { path: [[530, 1168], [570, 1235], [606, 1316]], name: "проспект Валерія Лобановського" },
  { path: [[372, 1125], [380, 1060], [394, 990]], name: "Чоколівський бульвар" },
  { path: [[337, 1346], [348, 1290], [354, 1216]], name: "вулиця Волинська" },
  { path: [[426, 1338], [460, 1325], [490, 1222]], name: "Повітрофлотський просп." },
  { path: [[184, 1275], [192, 1210], [206, 1130]], name: "вулиця Героїв Севастополя" },
  { path: [[127, 1180], [168, 1270]], name: "бульвар Кольцова" },
  { path: [[217, 1192], [245, 1280], [280, 1368]], name: "проспект Академіка Корольова" },
  { path: [[205, 1318], [215, 1375], [235, 1430]], name: "вулиця Симиренка" },
  { path: [[162, 1356], [203, 1450]], name: "ГОРОД КИЕВ" },
  { path: [[140, 1352], [198, 1472]], name: "КИЕВСКАЯ ОБЛАСТЬ" },
];

const CityMap = () => (
  <svg width="1141" height="501" viewBox="0 0 1141 501" fontFamily="Roboto, sans-serif">
    <rect width="1141" height="501" fill="#f7f7f7" />
    <g fill="#eaeaea">{rivers.map((r, i) => <path key={i} d={smooth(r) + "Z"} />)}</g>
    <g fill="#e3e3e3">
      {parks.map((r, i) => (
        <path key={i} d={"M" + r.map((p) => toMap(p).join(" ")).join("L") + "Z"} />
      ))}
    </g>
    <g fill="none" stroke="#fff" strokeWidth="1.300">
      {minorRoads.map((r, i) => <path key={i} d={smooth(r)} />)}
    </g>
    <g fill="none" stroke="#fff" strokeWidth="3">
      {mainRoads.map((r, i) => <path key={i} d={smooth(r)} />)}
    </g>
    <g fill="#858585" fontSize="6.500">
      {streets.map((s, i) => (
        <Fragment key={i}>
          <path id={`street-${i}`} d={smooth(s.path)} fill="none" />
          <text dy="2">
            <textPath href={`#street-${i}`} textLength={lengthOf(s.path)} lengthAdjust="spacingAndGlyphs">
              {s.name}
            </textPath>
          </text>
        </Fragment>
      ))}
    </g>
    <g textAnchor="middle" stroke="#f7f7f7" strokeWidth="2" paintOrder="stroke">
      {places.map((p, i) => {
        const [x, y] = toMap(p.at);
        const city = p.kind === "city";
        const park = p.kind === "park";
        return p.text.map((t, n) => (
          <text
            key={`${i}-${n}`}
            x={x}
            y={y + (n - (p.text.length - 1) / 2) * 8.6 + (city ? 5 : 3)}
            fontSize={city ? 14 : park ? 8.6 : 8}
            fontWeight={park ? 400 : 500}
            letterSpacing={city ? 0.8 : park ? 0 : 0.8}
            fill={park ? "#8f8f8f" : "#757575"}
          >
            {t}
          </text>
        ));
      })}
    </g>
    <g>
      <rect x="4" y="439" width="25" height="54" rx="1" fill="#fff" />
      <path d="M7.500 465.500h18" stroke="#e6e6e6" />
      <path d="M11 452h10M16 447v10M11 479.500h10" stroke="#666" strokeWidth="1.800" />
      <path d="M0 484.500h3.500M0 489.500h3.500M0 494.500h29" stroke="#8a8a8a" strokeWidth="1.500" strokeDasharray="5 1.500" />
    </g>
  </svg>
);

/* ---------- content ---------- */

const SiteHeader = ({ side }: { side: "left" | "right" }) => (
  <TopBar $side={side}>
    <LogoBox $drop={side === "left" ? 1 : 4.5}>
      <Logo />
    </LogoBox>
    <TopNav>
      <NavItem $gap={52}>
        +38 (068) 223-52-70 <CaretDown />
      </NavItem>
      <NavLink $gap={47}>Передзвоніть мені</NavLink>
      <NavItem $gap={45}>
        Укр <CaretDown />
      </NavItem>
      <NavIcon $gap={24}>
        <ProfileIcon />
        Профіль
      </NavIcon>
      <NavIcon>
        <MenuIcon />
        Меню
      </NavIcon>
    </TopNav>
  </TopBar>
);

interface Tariff {
  name: string;
  price: string;
  gap: number;
  world: string;
  ix: string;
  back: boolean;
  omega: boolean;
  total: string;
  badge?: string;
  hit?: boolean;
  wide?: boolean;
  helpOpen?: boolean;
}

const tariffs: Tariff[] = [
  { name: "Соціальний", price: "60", gap: 8, world: "5 Мбит", ix: "5 Мбит", back: false, omega: false, total: "150₴", helpOpen: true },
  { name: "Комфорт", price: "125", gap: 5, world: "50 Мбит", ix: "50 Мбит", back: true, omega: false, total: "150₴", badge: "Хіт", hit: true },
  { name: "Отптимальний", price: "150", gap: 5, world: "100 Мбит", ix: "100 Мбит", back: false, omega: false, total: "150₴" },
  { name: "Гігабіт", price: "250", gap: 5, world: "100 Мбит", ix: "1000 Мбит", back: true, omega: true, total: "250₴", badge: "Экономія 20%", wide: true },
];

const HelpRow = ({ name, active, children }: { name: string; active?: boolean; children: React.ReactNode }) => (
  <Feature>
    <FeatureHelp>
      <HelpIcon color={active ? c.blue : c.text} />
    </FeatureHelp>
    <FeatureName>{name}</FeatureName>
    {children}
  </Feature>
);

const ValueRow = ({ name, value }: { name: string; value: string }) => (
  <Feature>
    <FeatureName>{name}</FeatureName>
    <FeatureValue>{value}</FeatureValue>
  </Feature>
);

const TariffColumn = ({ t }: { t: Tariff }) => (
  <Column $hit={t.hit}>
    <ColumnHead $hit={t.hit}>{t.name}</ColumnHead>
    <Price>
      <Currency>₴</Currency>
      <Amount>{t.price}</Amount>
      <PriceSide $gap={t.gap}>
        <BadgeSlot>{t.badge && <Badge $wide={t.wide}>{t.badge}</Badge>}</BadgeSlot>
        / місяць
      </PriceSide>
    </Price>
    <Features $active={t.omega}>
      <ValueRow name="World" value={t.world} />
      <ValueRow name="Швидкість UA-IX" value={t.ix} />
      <ValueRow name="Безліміт UA" value="+" />
      <HelpRow name="Зовнішній IP"><Toggle /></HelpRow>
      <HelpRow name="Гігабітний порт"><FeatureValue>-</FeatureValue></HelpRow>
      <HelpRow name="Back-Resolving IP" active={t.helpOpen}><Toggle $on={t.back} /></HelpRow>
      <HelpRow name="Додатковий IP"><Toggle /></HelpRow>
      <ValueRow name="Вартість підключення" value="1₴" />
      <ValueRow name="Авансовий платіж" value="250₴" />
      <Feature>
        <FeatureName $brand>OMEGA.TV</FeatureName>
        <Toggle $on={t.omega} />
      </Feature>
    </Features>
    <SelectArea>
      <Select $active={t.omega}>
        Premium TV <CaretDown color={t.omega ? c.blue : "#a2a3ab"} />
      </Select>
    </SelectArea>
    <Total>
      <span>Итого:</span>
      <span>{t.total}</span>
    </Total>
    <Choose>
      ОБРАТИ ТАРИФ <CaretRight />
    </Choose>
  </Column>
);

const summary: [string, string][] = [
  ["Тариф: Оптимальний", "150₴ / Місяць"],
  ["Услуга: Зовнішній IP", "20₴ / Місяць"],
  ["Тариф: Omega TV", "20₴ / Місяць"],
  ["Услуга: Преміальний", "20₴"],
  ["Услуга: Кінозал", "20₴ / Місяць"],
];

const districts: [string, string][] = [
  ["В. ВАСИЛЬКІВСЬКА\n(ЧЕРВОНОАРМІЙСЬКА)", "вул. 45, 47, 49, 129, 130, 131, 132"],
  ["ВАСИЛЬКІВСЬКА", "вул. 2а, 4, 6, 8, 8а, 5/7, 7/7, 9/14, 11/11,\n13, 15/14, 47/1, 47/3, 49/1, 49/2, 49/3"],
  ["ГОЛОСІЇВСЬКИЙ", "просп. 74а, 88, 90, 92/1, 94/1, 96,\n98/2, 100, 100/2, 102/1, 104, 106/2,\n108/1, 108/1а, 108/2, 108/3, 110, 120/2,\n120/3, 122/2, 122/3"],
  ["ДАНЧЕНКА СЕРГІЯ", "вул. 32, 32а, 34, 34а"],
  ["ДЕМІЇВСЬКА", "вул. 35, 39, 45, 45а, 47, 51, 55"],
  ["ДУБІНІНА ВОЛОДІ", "вул. 2а, 16"],
  ["ЖУКОВСЬКОГО ВАСИЛЯ", "провул. 10, 13/16, 14, 15, 17/25"],
  ["ЗАДОРОЖНИЙ", "провул. 3к.1-3, 5к.1-2, 6"],
  ["ІОАННА ПАВЛА ІІ", "вул. 11"],
  ["КАХОВСЬКА", "вул. 58, 60, 62"],
  ["КОВПАКА", "вул. 3, 4"],
  ["КОЛОМИЙСЬКИЙ", "провул. 3/1, 10, 12, 13/23, 17/31а, 20"],
  ["ЛЕЙПЦИГСЬКА", "вул. 13"],
  ["ЛОБАНОВСЬКОГО ВАЛЕРІЯ", "просп. 152а"],
  ["ЛОМОНОСОВА", "вул. 5/1, 7, 8, 8б, 19, 21/14, 22/15, 24,\n26, 27, 29, 31, 31/2"],
  ["МАКСИМОВИЧА МИХАЙЛА", "вул. 3д"],
  ["МАРИЧАНСЬКА", "вул. 5, 5в, 6, 8, 9, 10, 11/8, 13"],
  ["ПИМОНЕНКА МИКОЛИ", "вул. 3, 4, 5, 12, 14, 20"],
  ["ПОЛТАВСЬКА", "вул. 4"],
  ["ПРЕДСЛАВИНСЬКА", "вул. 38, 51, 49"],
  ["САПЕРНЕ ПОЛЕ", "вул. 9а, 26, 26а, 28, 45"],
  ["СЄЧЄНОВА", "вул. 3, 4, 5, 10к1, 10к2, 10к3"],
  ["СІЧОВИХ СТРІЛЬЦІВ", "вул. 58, 68, 70, 72"],
  ["СТЕЛЬМАХА МИХАЙЛА", "вул. 10, 12, 12а"],
  ["СТУДЕНТСЬКА", "вул. 12/14"],
  ["ТУРГЕНЄВСЬКА", "вул. 29-33, 74, 76-78, 83-85"],
  ["ФІЛАТОВА АКАДЕМІКА", "вул. 1/22"],
];

const footerLinks = ["Інтернет додому", "Для бізнесу", "Забудовникам", "Абоненту", "Контакти", "Кабінет", "Про нас", "Новини"];

const TariffsPage = () => (
  <Site $side="left">
    <SiteHeader side="left" />
    <Crumbs $side="left">
      <span>Головна</span>
      <span>Інтернет додому</span>
      <span>Тарифи</span>
      <b>м. Київ</b>
    </Crumbs>
    <TitleBlock $side="left">
      <H1 $tight>Тарифи: м. Київ</H1>
    </TitleBlock>
    <Info>
      <H2>Загальна інформація</H2>
      <InfoColumns>
        <InfoList>
          <InfoItem><p>Підключення до мережі <b>– БЕЗКОШТОВНО</b></p></InfoItem>
          <InfoItem>
            <p>
              Тарифні пакети не накладають обмеження на кількість переданої чи<br />
              відправленої інформації (облік трафіку виконується, але кількість трафіку<br />
              необмежена), тарифні пакети є <b>"БЕЗЛІМІТНИМИ".</b>
            </p>
          </InfoItem>
          <InfoItem><p>Абонент вносить аванас на свій особистий рахунок у розмірі – <b>250 грн</b>.</p></InfoItem>
          <InfoItem>
            <p>Послуги призначені <b>виключно для некомерційного використання</b><br />приватними особами.</p>
          </InfoItem>
          <InfoItem>
            <p>Кабель від телекомунікаційного обладнання оператора до приміщення<br />абонента є <b>власністю оператора.</b></p>
          </InfoItem>
        </InfoList>
        <InfoList>
          <InfoItem><p>Тарифний період - <b>1 календарний місяць</b>.</p></InfoItem>
          <InfoItem>
            <p>
              <b>Опівночі першого числа кожного місяця</b> з рахунку абонента знімається<br />
              абонплата згідно тарифного пакету та встановлюється вказана в тарифі<br />
              швидкість з'єднання з мережею Інтернет.
            </p>
          </InfoItem>
          <InfoItem><p>Залишок невикористаних коштів <b>переноситься на наступний місяць.</b></p></InfoItem>
          <InfoItem>
            <p>
              Зміна тарифу на наступний місяць можлива лише згідно попереднього<br />
              замовлення. <b>Замовити зміну тарифу абонент може самостійно в</b><br />
              "<CabinetLink>Особистому кабінеті</CabinetLink>".
            </p>
          </InfoItem>
        </InfoList>
      </InfoColumns>
    </Info>
    <PickBar>
      <H2>Виберіть тариф</H2>
      <PickHint>Оберіть тарифний план та його умови</PickHint>
    </PickBar>
    <Table>
      {tariffs.map((t) => <TariffColumn key={t.name} t={t} />)}
      <Popup>
        <PopupTitle>Back-Resolving IP</PopupTitle>
        <p>
          Послуга "Back-resolving IP" дозволяє встановити<br />
          довільне доменне ім'я Вашій маршрутизованій<br />
          IP-адресі.
        </p>
        <PopupMore>
          Детальніше <CaretRight color={c.blue} />
        </PopupMore>
      </Popup>
    </Table>
    <Pager>
      <ArrowIcon color="#9b9ca6" flip />
      <PagerBars>
        <PagerBar $on />
        <PagerBar />
        <PagerBar />
        <PagerBar />
      </PagerBars>
      <ArrowIcon color={c.blue} />
    </Pager>
    <Summary>
      <SummaryHead>
        <span>Итого:</span>
        <span>251₴</span>
      </SummaryHead>
      {summary.map(([name, value]) => (
        <SummaryRow key={name}>
          <span>{name}</span>
          <FeatureValue>{value}</FeatureValue>
        </SummaryRow>
      ))}
    </Summary>
  </Site>
);

const CoveragePage = () => (
  <Site $side="right">
    <SiteHeader side="right" />
    <Crumbs $side="right">
      <span>Головна</span>
      <span>Інтернет додому</span>
      <b>Покриття</b>
    </Crumbs>
    <TitleBlock $side="right">
      <H1>Покриття</H1>
    </TitleBlock>
    <MapCard>
      <CityMap />
    </MapCard>
    <Districts>
      {districts.map(([name, houses]) => (
        <District key={name}>
          <DistrictName>{name}</DistrictName>
          {houses}
        </District>
      ))}
    </Districts>
    <Footer>
      <FooterBody>
        <Contacts>
          <Contact><PhoneIcon />+38 (068) 223-52-70</Contact>
          <Contact><AtIcon />kyivlink@gmail.com</Contact>
        </Contacts>
        <FooterLinks>
          {footerLinks.map((l) => <span key={l}>{l}</span>)}
        </FooterLinks>
      </FooterBody>
    </Footer>
  </Site>
);

export default function App() {
  return (
    <Page>
      <Global />
      <Banner>
        <BannerTitle>07 - Other site pages</BannerTitle>
      </Banner>
      <Showcase>
        <Sample $top={228}>
          <SampleLabel $end>Tariffs</SampleLabel>
          <Frame $side="left">
            <TariffsPage />
          </Frame>
        </Sample>
        <Sample $top={434}>
          <SampleLabel>City coverage</SampleLabel>
          <Frame $side="right">
            <CoveragePage />
          </Frame>
        </Sample>
      </Showcase>
    </Page>
  );
}
